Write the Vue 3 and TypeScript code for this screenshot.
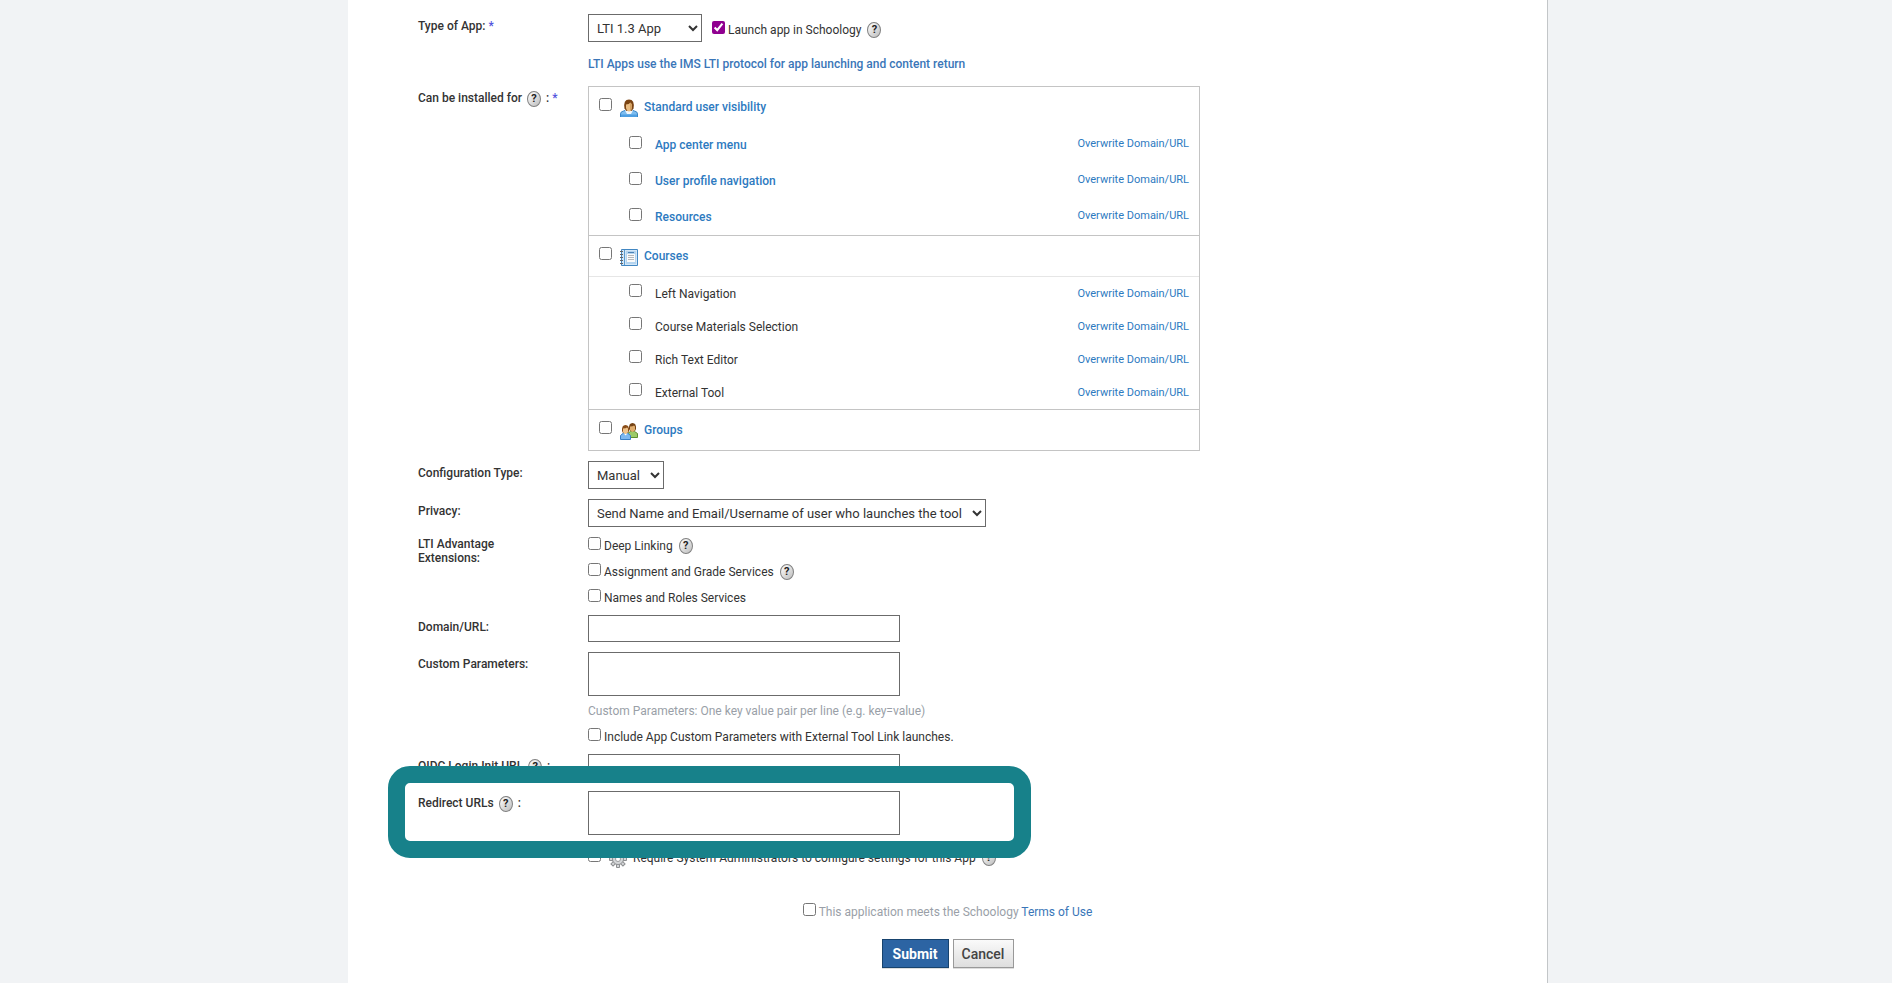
<script setup lang="ts">
import { reactive, ref } from 'vue'

interface Placement {
  id: string
  label: string
}
interface Group {
  id: string
  label: string
  icon: 'user' | 'course' | 'group'
  accent: boolean
  items: Placement[]
}

const groups: Group[] = [
  {
    id: 'standard',
    label: 'Standard user visibility',
    icon: 'user',
    accent: true,
    items: [
      { id: 'app-center', label: 'App center menu' },
      { id: 'profile-nav', label: 'User profile navigation' },
      { id: 'resources', label: 'Resources' },
    ],
  },
  {
    id: 'courses',
    label: 'Courses',
    icon: 'course',
    accent: false,
    items: [
      { id: 'left-nav', label: 'Left Navigation' },
      { id: 'materials', label: 'Course Materials Selection' },
      { id: 'rich-text', label: 'Rich Text Editor' },
      { id: 'external-tool', label: 'External Tool' },
    ],
  },
  { id: 'groups', label: 'Groups', icon: 'group', accent: false, items: [] },
]

const extensions = [
  { id: 'deep-linking', label: 'Deep Linking', help: true },
  { id: 'grade-services', label: 'Assignment and Grade Services', help: true },
  { id: 'names-roles', label: 'Names and Roles Services', help: false },
]

const checked = reactive<Record<string, boolean>>({})
const launchInApp = ref(true)
const appType = ref('LTI 1.3 App')
const configType = ref('Manual')
const privacy = ref('Send Name and Email/Username of user who launches the tool')
const domain = ref('')
const params = ref('')
const oidc = ref('')
const redirects = ref('')
const gearTeeth = [0, 45, 90, 135, 180, 225, 270, 315]
</script>

<template>
  <div class="page">
    <main class="panel">
      <form id="app-form" class="form" @submit.prevent>
        <div class="row">
          <label class="name" for="app-type">Type of App: <span class="req">*</span></label>
          <div class="field">
            <div class="type-line">
              <select id="app-type" v-model="appType" class="type-select">
                <option>LTI 1.3 App</option>
                <option>LTI 1.1 App</option>
              </select>
              <div class="check launch">
                <input id="launch" v-model="launchInApp" type="checkbox" />
                <label for="launch">Launch app in Schoology</label>
                <button type="button" class="help" aria-label="Help">?</button>
              </div>
            </div>
            <p class="note">LTI Apps use the IMS LTI protocol for app launching and content return</p>
          </div>
        </div>

        <div class="row">
          <div class="name">Can be installed for <button type="button" class="help" aria-label="Help">?</button> : <span class="req">*</span></div>
          <div class="field">
            <div class="box">
              <section v-for="g in groups" :key="g.id" class="group" :class="{ accent: g.accent }">
                <div class="head">
                  <input :id="g.id" v-model="checked[g.id]" type="checkbox" />
                  <svg v-if="g.icon === 'user'" class="icon" viewBox="0 0 18 18" aria-hidden="true">
                    <path d="M.5 18v-3q0-2.500 3-3l3-1h5l3 1q3 .5 3 3v3z" fill="#7dbdf0" stroke="#3b86c8" />
                    <path d="M1 15.500h16V18H1z" fill="#4f9fe2" />
                    <path d="M5 11.500 7 15h4l2-3.500-2-1H7z" fill="#f2f8fd" />
                    <path d="M4.500 9.500Q3 .5 9 .5t4.500 9L11.500 12h-5z" fill="#7b4413" />
                    <path d="M6 5.500q3 0 4.500-2l1.500 2V9q-1 3.500-3 3.500T6 9z" fill="#e9bd83" />
                    <path d="M10 4q1.500 0 2 2v3q-.5 2-2 2.500z" fill="#c58c4b" opacity=".6" />
                  </svg>
                  <svg v-else-if="g.icon === 'course'" class="icon" viewBox="0 0 18 18" aria-hidden="true">
                    <path d="M1.500 1.500h16v16h-16z" fill="#d3e7f8" stroke="#4287c2" />
                    <path d="M4.500 2v15" stroke="#5b9bd0" />
                    <path d="M6 3h10v13H6z" fill="#b4d4ef" />
                    <path d="M7 6h8v8H7z" fill="#fafafa" />
                    <path d="M8 4.500h6" stroke="#4b82b5" />
                    <path d="M8 7.500h6M8 9.500h6M8 11.500h6" stroke="#b4b8bc" />
                    <path d="M0 3.500h3M0 6.500h3M0 9.500h3M0 12.500h3M0 15.500h3" stroke="#62666a" />
                  </svg>
                  <svg v-else class="icon" viewBox="0 0 18 18" aria-hidden="true">
                    <path d="M7.500 15.500v-4l3-2h4l3 2v4z" fill="#9ccb68" stroke="#5e8e2f" />
                    <path d="M9 7Q8.500 1 12.500 1T16 7l-1 2h-5z" fill="#754314" />
                    <path d="M10 4.500q3 0 4-1l1 1V8q-1 2-2.500 2T10 8z" fill="#e0ad6d" />
                    <path d="M.5 17.500v-4l3-2.500h4l3 2.500v4z" fill="#7db8f0" stroke="#3a7fc4" />
                    <path d="M4 11.500 5.500 13.500 7.500 11.500z" fill="#fff" />
                    <path d="M2 9Q1.500 3 5.500 3T9 9l-1 2H3z" fill="#8a4d18" />
                    <path d="M3 6.500q3 0 4-1l1 1V10q-1 2-2.500 2T3 10z" fill="#f0c48a" />
                  </svg>
                  <label :for="g.id">{{ g.label }}</label>
                </div>
                <div v-if="g.items.length" class="items">
                  <div v-for="item in g.items" :key="item.id" class="item">
                    <input :id="item.id" v-model="checked[item.id]" type="checkbox" />
                    <label :for="item.id">{{ item.label }}</label>
                    <a href="#">Overwrite Domain/URL</a>
                  </div>
                </div>
              </section>
            </div>
          </div>
        </div>

        <div class="row">
          <label class="name" for="config-type">Configuration Type:</label>
          <div class="field">
            <select id="config-type" v-model="configType">
              <option>Manual</option>
            </select>
          </div>
        </div>

        <div class="row">
          <label class="name" for="privacy">Privacy:</label>
          <div class="field">
            <select id="privacy" v-model="privacy">
              <option>Send Name and Email/Username of user who launches the tool</option>
            </select>
          </div>
        </div>

        <div class="row">
          <div class="name flush">LTI Advantage<br />Extensions:</div>
          <div class="field stack">
            <div v-for="e in extensions" :key="e.id" class="check">
              <input :id="e.id" v-model="checked[e.id]" type="checkbox" />
              <label :for="e.id">{{ e.label }}</label>
              <button v-if="e.help" type="button" class="help" aria-label="Help">?</button>
            </div>
          </div>
        </div>

        <div class="row">
          <label class="name" for="domain">Domain/URL:</label>
          <div class="field"><input id="domain" v-model="domain" class="text" type="text" /></div>
        </div>

        <div class="row">
          <label class="name" for="params">Custom Parameters:</label>
          <div class="field">
            <textarea id="params" v-model="params" class="text area"></textarea>
            <p class="hint">Custom Parameters: One key value pair per line (e.g. key=value)</p>
          </div>
        </div>

        <div class="row">
          <div class="name"></div>
          <div class="check">
            <input id="include" v-model="checked.include" type="checkbox" />
            <label for="include">Include App Custom Parameters with External Tool Link launches.</label>
          </div>
        </div>

        <div class="row">
          <div class="name"><label for="oidc">OIDC Login Init URL</label> <button type="button" class="help" aria-label="Help">?</button> :</div>
          <div class="field"><input id="oidc" v-model="oidc" class="text" type="text" /></div>
        </div>

        <div class="row highlighted">
          <div class="name"><label for="redirects">Redirect URLs</label> <button type="button" class="help" aria-label="Help">?</button> :</div>
          <div class="field"><textarea id="redirects" v-model="redirects" class="text area"></textarea></div>
          <div class="highlight" aria-hidden="true"></div>
        </div>

        <div class="row">
          <div class="name"></div>
          <div class="check admin">
            <input id="admin" v-model="checked.admin" type="checkbox" />
            <svg class="gear" viewBox="0 0 18 18" aria-hidden="true">
              <g fill="#d4d6d8" stroke="#8d8f91">
                <path v-for="a in gearTeeth" :key="a" d="M7.500 4V.5h3V4" :transform="`rotate(${a} 9 9)`" />
                <circle cx="9" cy="9" r="5.500" />
              </g>
              <circle cx="9" cy="9" r="4.500" fill="#d4d6d8" />
              <circle cx="9" cy="9" r="2.500" fill="#fff" stroke="#9a9c9e" />
            </svg>
            <label for="admin">Require System Administrators to configure settings for this App</label>
            <button type="button" class="help" aria-label="Help">?</button>
          </div>
        </div>
      </form>

      <footer class="footer">
        <div class="check terms">
          <input id="terms" v-model="checked.terms" type="checkbox" />
          <label for="terms">This application meets the Schoology <a href="#">Terms of Use</a></label>
        </div>
        <div class="actions">
          <button type="submit" form="app-form" class="btn primary">Submit</button>
          <button type="button" class="btn">Cancel</button>
        </div>
      </footer>
    </main>
  </div>
</template>

<style>
body {
  background: #f1f3f5;
}
</style>

<style scoped>
.page {
  box-sizing: border-box;
  min-height: 100vh;
  padding-left: 4px;
  display: flex;
  justify-content: center;
  background: #f1f3f5;
  color: #333;
  font: 12px/14px Roboto, "Liberation Sans", sans-serif;
}
.panel {
  box-sizing: border-box;
  width: 100%;
  max-width: 1200px;
  padding: 14px 70px;
  background: #fff;
  border-right: 1px solid #c3c6c8;
}
.form {
  display: flex;
  flex-direction: column;
  gap: 10px;
}
.row {
  display: grid;
  grid-template-columns: 170px minmax(0, 1fr);
}
.name {
  padding-top: 5px;
  font-weight: 500;
}
.name.flush {
  padding-top: 0;
}
.req {
  color: #5353dd;
}
.field {
  min-width: 0;
}
.type-line {
  display: flex;
  align-items: center;
  gap: 10px;
}
.note {
  margin: 15px 0 5px;
  color: #3a76b8;
  font-weight: 500;
}
select,
.text {
  display: block;
  box-sizing: border-box;
  border: 1px solid #6b6b6b;
  border-radius: 0;
  background: #fff;
  color: #333;
  font: 13px/16px Roboto, "Liberation Sans", sans-serif;
}
select {
  height: 28px;
  padding: 4px 7px 4px 4px;
  max-width: 100%;
}
.type-select {
  width: 114px;
}
.text {
  width: 312px;
  height: 27px;
  max-width: 100%;
  padding: 4px;
}
.area {
  height: 44px;
  resize: none;
}
input[type="checkbox"] {
  flex: none;
  width: 13px;
  height: 13px;
  margin: 0;
  accent-color: #900090;
}
.check {
  display: flex;
  align-items: flex-start;
  height: 16px;
  gap: 3px;
}
.check label {
  padding-top: 2px;
}
.launch {
  margin-top: 2px;
}
.stack {
  display: flex;
  flex-direction: column;
  gap: 10px;
}
.help {
  flex: none;
  box-sizing: border-box;
  width: 14px;
  height: 16px;
  margin: -2px 2px;
  padding: 0;
  border: 1px solid #808080;
  border-radius: 50%;
  background: linear-gradient(135deg, #fff, #bdbdbd);
  color: #222;
  font: 700 11px/14px Roboto, "Liberation Sans", sans-serif;
  vertical-align: middle;
}
.check .help {
  margin: 1px 0 0 3px;
}
.box {
  box-sizing: border-box;
  max-width: 612px;
  border: 1px solid #c4c4c4;
}
.group + .group {
  border-top: 1px solid #c4c4c4;
}
.head {
  display: flex;
  align-items: flex-start;
  height: 29px;
  padding: 11px 10px 0;
}
.head .icon {
  width: 18px;
  height: 18px;
  margin: 1px 6px 0 8px;
}
.head label {
  padding-top: 2px;
  color: #2d7abf;
  font-weight: 500;
}
.items {
  border-top: 1px solid #e6e6e6;
}
.accent .items {
  border-top: 0;
}
.item {
  box-sizing: border-box;
  display: flex;
  align-items: flex-start;
  height: 33px;
  padding: 7px 10px 0 40px;
}
.item label {
  padding: 3px 0 0 13px;
}
.item a {
  margin-left: auto;
  padding-top: 3px;
  font-size: 11px;
}
.accent .item {
  height: 36px;
  padding-top: 9px;
}
.accent .item label {
  padding-top: 2px;
  color: #2d7abf;
  font-weight: 500;
}
.accent .item a {
  padding-top: 1px;
}
a {
  color: #2d7abf;
  text-decoration: none;
}
.hint {
  margin: 8px 0 0;
  color: #9a9fa8;
}
.highlighted {
  position: relative;
}
.highlight {
  position: absolute;
  top: -25px;
  left: -30px;
  box-sizing: border-box;
  width: 643px;
  height: 92px;
  border: 17px solid #17818a;
  border-radius: 22px;
  pointer-events: none;
}
.admin {
  margin-top: 4px;
}
.gear {
  width: 18px;
  height: 18px;
  margin: 1px 3px 0 5px;
}
.footer {
  display: flex;
  flex-direction: column;
  align-items: center;
  gap: 20px;
  margin-top: 38px;
}
.terms {
  color: #9a9fa8;
}
.terms a {
  color: #3a76b8;
}
.actions {
  display: flex;
  gap: 4px;
}
.btn {
  box-sizing: border-box;
  min-width: 61px;
  height: 29px;
  padding: 0 8px;
  border: 1px solid #999;
  background: linear-gradient(#fafafa, #dedede);
  color: #444;
  font: 500 14px/16px Roboto, "Liberation Sans", sans-serif;
  box-shadow: 0 1px 0 #ddd;
}
.primary {
  min-width: 67px;
  border-color: #17436e;
  background: #2c64a3;
  color: #fff;
  font-weight: 700;
}
</style>
